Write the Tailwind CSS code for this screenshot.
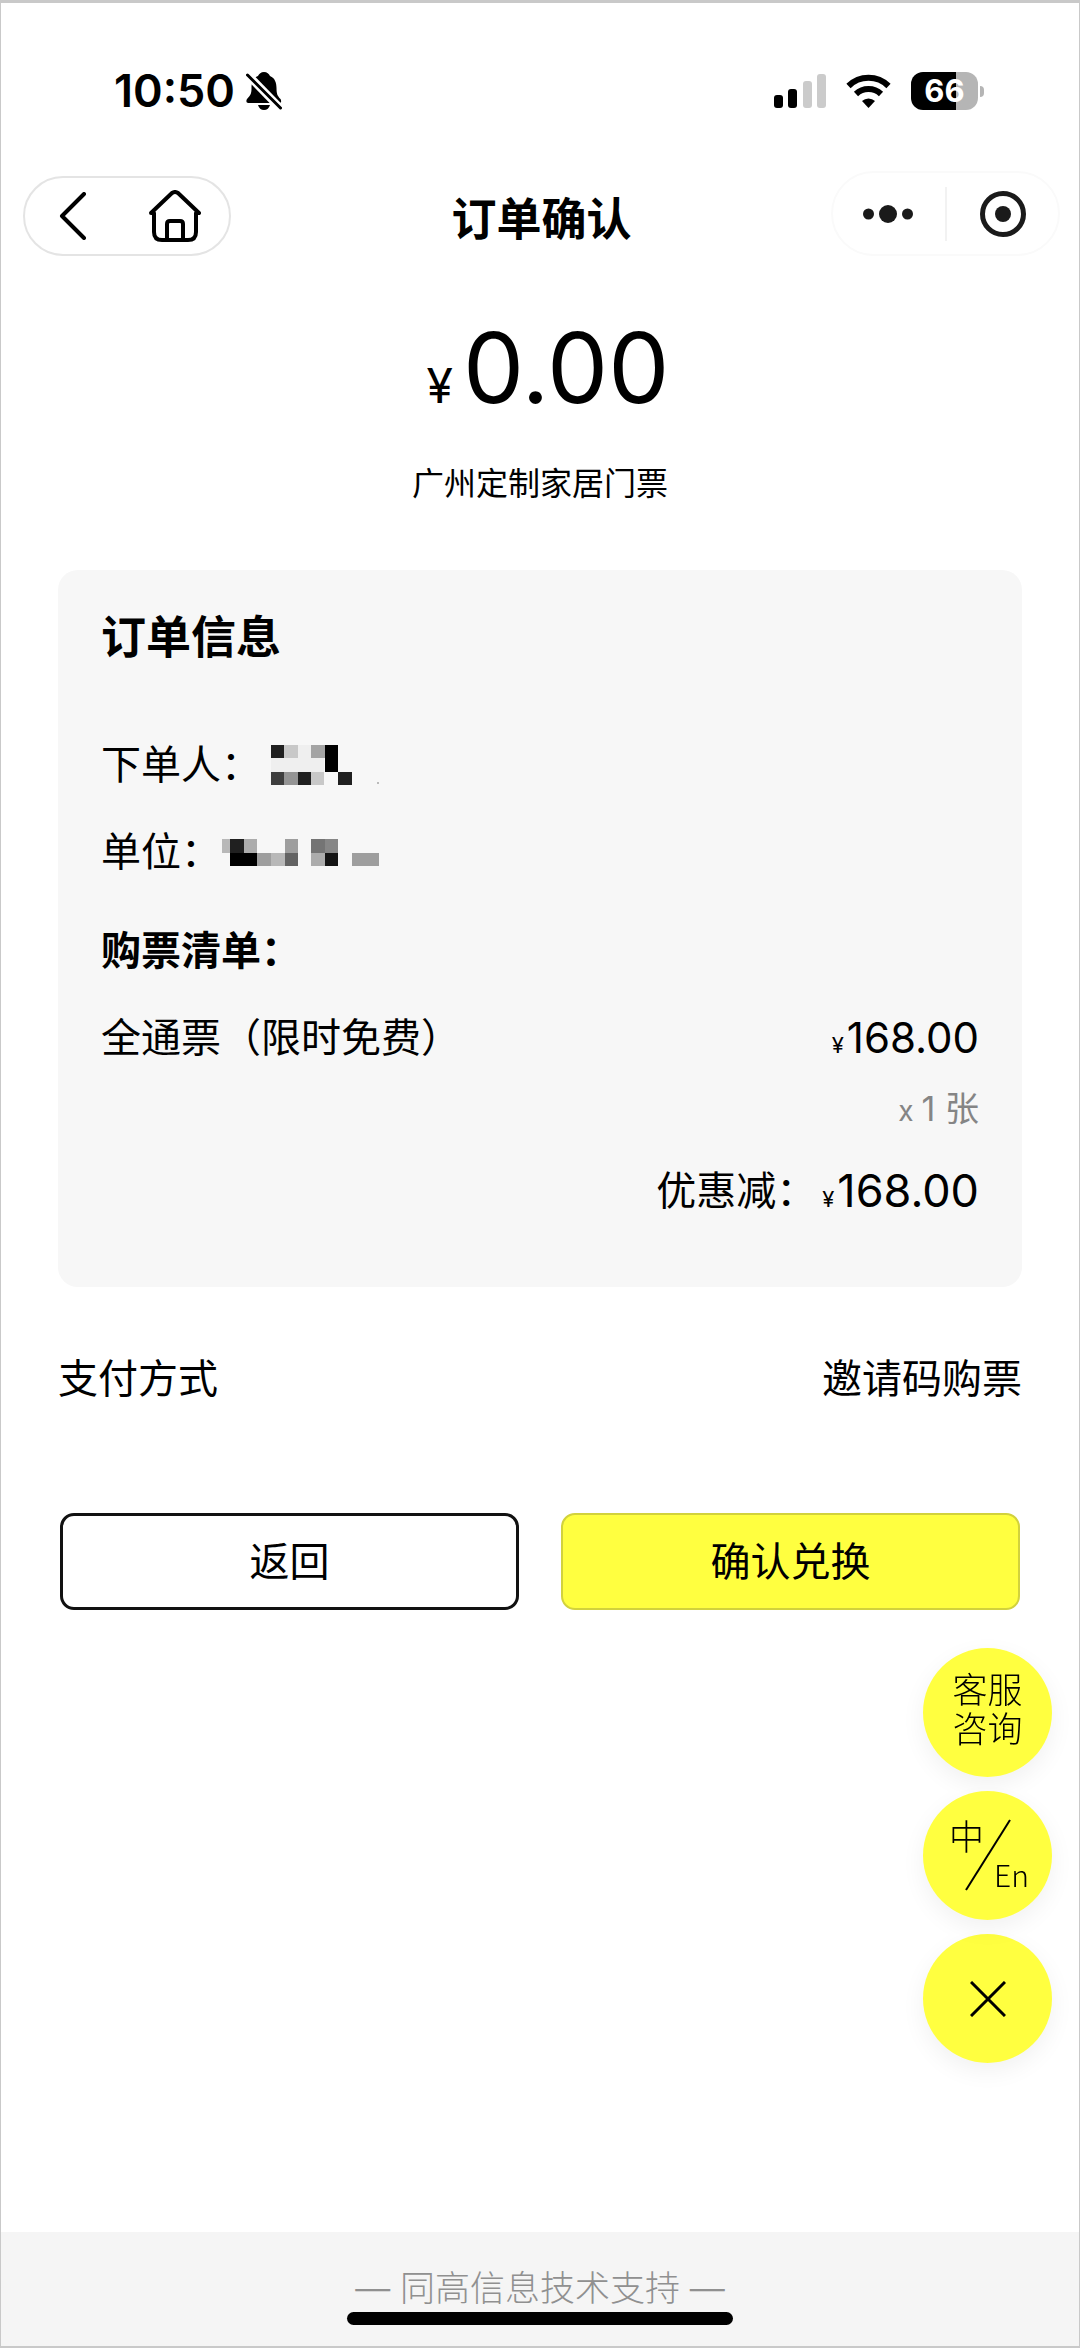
<!DOCTYPE html>
<html lang="zh-CN">
<head>
<meta charset="utf-8">
<meta name="viewport" content="width=device-width, initial-scale=1">
<title>订单确认</title>
<script src="https://cdn.jsdelivr.net/npm/@tailwindcss/browser@4"></script>
</head>
<body class="bg-white">
<div class="flex min-h-screen flex-col border-x border-t-3 border-b-2 border-[#c9c9c9] bg-white font-['Inter','Noto_Sans_CJK_SC',sans-serif] text-[40px] leading-[60px] text-black">

  <!-- Status bar -->
  <div class="mt-[49px] flex h-[78px] items-center justify-between pr-[95px] pl-[113px]">
    <div class="flex items-center gap-[11px]">
      <span class="text-[45px] font-semibold">10:50</span>
      <svg class="h-[38px] w-[36px]" viewBox="0 0 36 38" role="img" aria-label="静音">
        <path d="M18 0c3 0 5 2 6 4 5 2 6.500 7 6.500 12 0 6 1 8 4 11 1 1.500 1 4-1 4H2.500c-2.500 0-2.500-2.500-1.500-4 4-4 4.500-6 4.500-11 0-5 1.500-10 6.500-12 1-2 3-4 6-4z"/>
        <path d="M12 33h12c-.8 3-3 5-6 5s-5.200-2-6-5z"/>
        <path d="M0 1l36 37" stroke="#fff" stroke-width="8"/>
        <path d="M1.500 3l33 33" stroke="#000" stroke-width="3" stroke-linecap="round"/>
      </svg>
    </div>
    <div class="flex items-center gap-5">
      <svg class="h-[34px] w-[52px]" viewBox="0 0 52 34" role="img" aria-label="信号">
        <rect x="0" y="21" width="9" height="13" rx="3"/>
        <rect x="14" y="15" width="9" height="19" rx="3"/>
        <rect x="29" y="7" width="9" height="27" rx="3" fill="#cbcbcb"/>
        <rect x="43" y="0" width="9" height="34" rx="3" fill="#cbcbcb"/>
      </svg>
      <svg class="h-[34px] w-[45px]" viewBox="0 0 45 34" fill="none" stroke="#000" stroke-width="6" role="img" aria-label="无线网络">
        <path d="M2.500 12a28.500 28.500 0 0 1 40 0"/>
        <path d="M10 20a18 18 0 0 1 25 0"/>
        <path d="M22.500 34l-6.500-7a9.500 9.500 0 0 1 13 0z" fill="#000" stroke="none"/>
      </svg>
      <div class="flex items-center gap-[2px]">
        <div class="flex h-[38px] w-[67px] items-center justify-center rounded-xl bg-linear-to-r from-black from-67% to-[#b5b5b5] to-67% text-[31px] font-bold text-white">66</div>
        <div class="h-[11px] w-[4px] rounded-r-full bg-[#b5b5b5]"></div>
      </div>
    </div>
  </div>

  <!-- Navigation -->
  <header class="mt-[41px] grid grid-cols-[1fr_auto_1fr] items-end pr-[19px] pl-[22px]">
    <nav class="flex h-[80px] w-[208px] items-center justify-between rounded-full border-2 border-[#e4e4e4] pr-[28px] pl-[34px]">
      <button type="button" aria-label="返回上一页">
        <svg class="h-[48px] w-[28px]" viewBox="0 0 28 48" fill="none" stroke="#000" stroke-width="4" stroke-linecap="round" stroke-linejoin="round"><path d="M25 2L3 24l22 22"/></svg>
      </button>
      <button type="button" aria-label="首页">
        <svg class="h-[52px] w-[52px]" viewBox="0 0 52 52" fill="none" stroke="#000" stroke-width="4" stroke-linecap="round" stroke-linejoin="round">
          <path d="M5 24v-1h-3L23 3q3-2 6 0l21 20h-3v19q0 8-8 8H13q-8 0-8-8V24"/>
          <path d="M18 50V34q0-3 3-3h10q3 0 3 3v16"/>
        </svg>
      </button>
    </nav>
    <h1 class="text-[45px] leading-[72px] font-bold">订单确认</h1>
    <div class="flex h-[85px] w-[229px] items-center justify-end justify-self-end rounded-full border-2 border-[#fafafa] pr-[32px]">
      <button type="button" aria-label="更多">
        <svg class="h-[20px] w-[50px]" viewBox="0 0 50 20" fill="#1a1a1a"><circle cx="5.500" cy="10" r="5.500"/><circle cx="25" cy="10" r="9"/><circle cx="44.500" cy="10" r="5.500"/></svg>
      </button>
      <span class="mr-[33px] ml-[32px] h-[54px] w-[2px] bg-[#f2f2f2]"></span>
      <button type="button" aria-label="关闭小程序">
        <svg class="h-[46px] w-[46px]" viewBox="0 0 46 46"><circle cx="23" cy="23" r="20.500" fill="none" stroke="#1a1a1a" stroke-width="5"/><circle cx="23" cy="23" r="8" fill="#1a1a1a"/></svg>
      </button>
    </div>
  </header>

  <main class="flex flex-col px-[57px]">
    <div class="mt-14 text-center">
      <p class="pl-4 text-[97px] leading-[112px]"><span class="mr-[10px] text-[48px] leading-none">¥</span>0.00</p>
      <p class="mt-9 text-[32px] leading-[48px]">广州定制家居门票</p>
    </div>

    <section class="mt-[62px] rounded-[20px] bg-[#f7f7f7] px-[43px] pt-[38px] pb-[66px]">
      <h2 class="text-[45px] font-bold">订单信息</h2>
      <dl class="mt-[67px]">
        <div class="flex items-center">
          <dt>下单人：</dt>
          <dd class="pl-[10px]">
            <svg class="h-[40px] w-[109px]" viewBox="0 0 327 120" shape-rendering="crispEdges" role="img" aria-label="已隐藏">
              <path fill="#efefef" d="M0 40h160v40H0zM80 0h40v40H80z"/>
              <path fill="#202020" d="M0 0h40v40H0zM80 80h40v40H80zM201 80h41v40h-41z"/>
              <path fill="#c8c8c8" d="M40 0h40v40H40zM120 80h40v40h-40z"/>
              <path fill="#a4a4a4" d="M121 0h40v40h-40z"/>
              <path fill="#000" d="M161 0h40v80h-40z"/>
              <path fill="#3e3e3e" d="M0 80h40v40H0z"/>
              <path fill="#949494" d="M40 80h40v40H40z"/>
              <path fill="#bbb" d="M319 111h6v6h-6z"/>
            </svg>
          </dd>
        </div>
        <div class="mt-[27px] flex items-center">
          <dt>单位：</dt>
          <dd>
            <svg class="h-[27px] w-[158px]" viewBox="0 0 474 81" shape-rendering="crispEdges" role="img" aria-label="已隐藏">
              <path fill="#b8b8b8" d="M3 0h25v41H3zM151 41h40v40h-40z"/>
              <path fill="#202020" d="M28 0h40v41H28z"/>
              <path fill="#acacac" d="M68 0h40v41H68zM271 41h40v40h-40z"/>
              <path fill="#9e9e9e" d="M191 0h40v41h-40zM108 41h43v40h-43zM393 41h80v40h-80z"/>
              <path fill="#747474" d="M271 0h40v41h-40z"/>
              <path fill="#868686" d="M311 0h40v41h-40z"/>
              <path fill="#000" d="M28 41h80v40H28z"/>
              <path fill="#636363" d="M191 41h40v40h-40z"/>
              <path fill="#141414" d="M311 41h40v40h-40z"/>
            </svg>
          </dd>
        </div>
      </dl>
      <h3 class="mt-[39px] font-bold">购票清单：</h3>
      <div class="mt-[27px] flex items-center justify-between">
        <span>全通票（限时免费）</span>
        <span class="text-[42px]"><span class="mr-[3px] text-[22px] leading-none">¥</span>168.00</span>
      </div>
      <p class="mt-[17px] text-right text-[34px] leading-[48px] text-[#858585]"><span class="mr-[8px] text-[28px] leading-none">x</span>1 张</p>
      <div class="mt-7 flex items-center justify-end gap-[6px]">
        <span>优惠减：</span>
        <span class="text-[45px]"><span class="mr-[3px] text-[22px] leading-none">¥</span>168.00</span>
      </div>
    </section>

    <div class="mt-[62px] flex justify-between">
      <span>支付方式</span>
      <span>邀请码购票</span>
    </div>

    <div class="mt-[104px] grid grid-cols-2 gap-[42px] px-[2px]">
      <button type="button" class="h-[97px] rounded-[14px] border-3 border-[#111]">返回</button>
      <button type="button" class="h-[97px] rounded-[14px] border-2 border-[#d2d23c] bg-[#ffff40]">确认兑换</button>
    </div>
  </main>

  <footer class="mt-auto flex h-[114px] flex-col items-center bg-[#f5f5f5] pt-[33px]">
    <p class="text-[35px] leading-[47px] font-light text-[#909090]">— 同高信息技术支持 —</p>
    <div class="h-[13px] w-[386px] rounded-full bg-black"></div>
  </footer>
</div>

<!-- Floating shortcuts -->
<aside class="fixed right-7 bottom-[285px] flex flex-col gap-[14px] font-['Inter','Noto_Sans_CJK_SC',sans-serif] text-black">
  <button type="button" class="flex size-[129px] items-center justify-center rounded-full bg-[#ffff40] pb-[6px] text-[35px] leading-[39px] font-light shadow-[0_8px_24px_rgba(0,0,0,0.06)]"><span>客服<br>咨询</span></button>
  <button type="button" class="relative size-[129px] rounded-full bg-[#ffff40] leading-[40px] font-light shadow-[0_8px_24px_rgba(0,0,0,0.06)]">
    <span class="absolute top-[26px] left-[26px] text-[35px]">中</span>
    <svg class="absolute top-[28px] left-[42px] h-[72px] w-[46px]" viewBox="0 0 46 72" stroke="#000" stroke-width="2"><path d="M1 71L45 1"/></svg>
    <span class="absolute top-[63px] left-[71px] font-['Noto_Sans_CJK_SC',sans-serif] text-[30px]">En</span>
  </button>
  <button type="button" aria-label="收起" class="flex size-[129px] items-center justify-center rounded-full bg-[#ffff40] shadow-[0_8px_24px_rgba(0,0,0,0.06)]">
    <svg class="size-[36px]" viewBox="0 0 36 36" stroke="#000" stroke-width="3"><path d="M1 1l34 34M35 1L1 35"/></svg>
  </button>
</aside>
</body>
</html>
